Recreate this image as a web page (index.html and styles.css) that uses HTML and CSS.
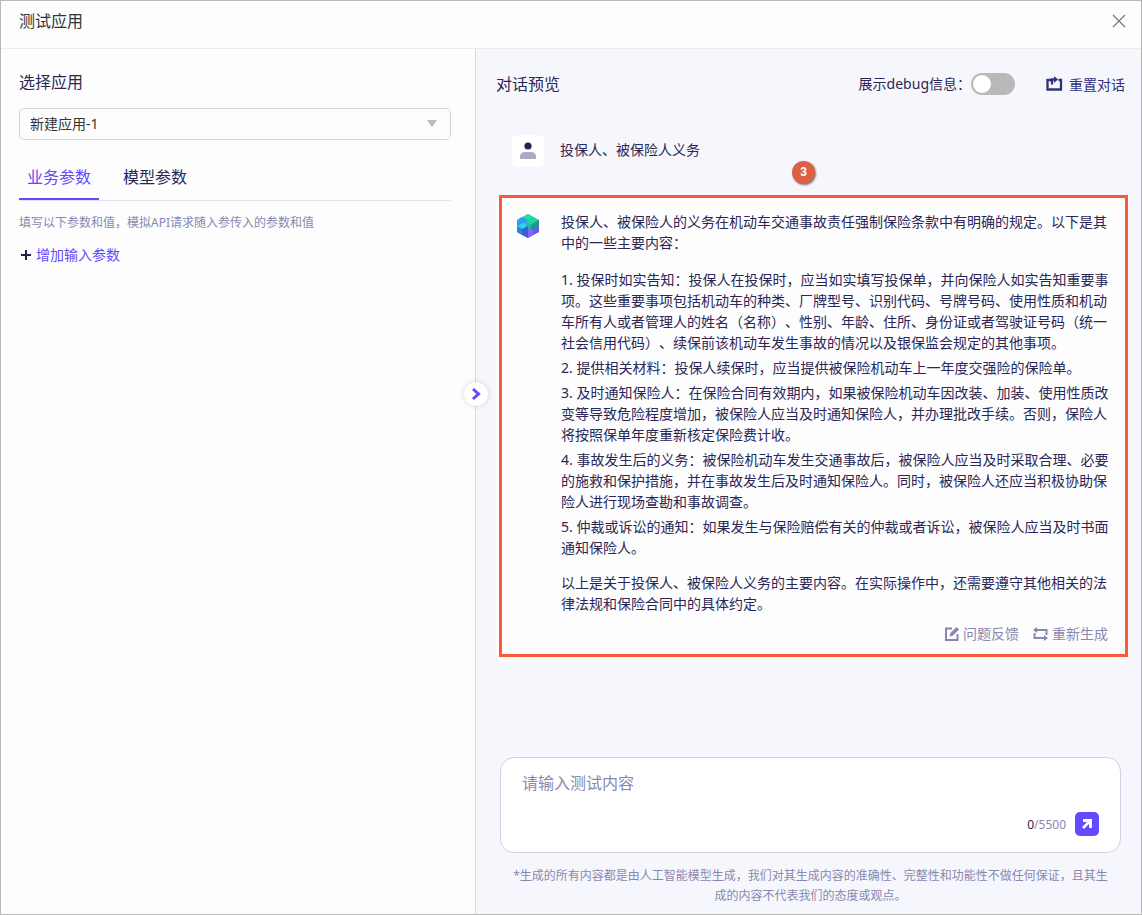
FILE: index.html
```html
<!DOCTYPE html>
<html lang="zh-CN">
<head>
    <meta charset="UTF-8">
    <meta name="viewport" content="width=device-width, initial-scale=1.0">
    <title>测试应用</title>
    <link rel="stylesheet" href="styles.css">
</head>
<body>

<header class="header">
    <h1>测试应用</h1>
    <button type="button" class="close" aria-label="关闭">
        <svg width="14" height="14" viewBox="0 0 14 14"><path d="M1 1l12 12M13 1L1 13" stroke="#777" stroke-width="1.2" fill="none"/></svg>
    </button>
</header>

<main class="main">
    <section class="settings">
        <label class="title" for="app">选择应用</label>
        <div class="select-box">
            <select id="app">
                <option>新建应用-1</option>
            </select>
        </div>
        <div class="tabs">
            <button type="button" class="tab active">业务参数</button>
            <button type="button" class="tab">模型参数</button>
        </div>
        <p class="hint">填写以下参数和值，模拟API请求随入参传入的参数和值</p>
        <button type="button" class="add">
            <svg width="10" height="10" viewBox="0 0 10 10"><path d="M5 0v10M0 5h10" stroke="#262244" stroke-width="2"/></svg>
            增加输入参数
        </button>
        <button type="button" class="collapse" aria-label="收起">
            <svg width="10" height="14" viewBox="0 0 10 14"><path d="M2 2l5.500 5L2 12" stroke="#624aff" stroke-width="3" fill="none"/></svg>
        </button>
    </section>

    <section class="preview">
        <div class="preview-head">
            <h2 class="title">对话预览</h2>
            <label class="debug" for="debug">展示debug信息：</label>
            <input type="checkbox" id="debug" class="switch">
            <button type="button" class="reset">
                <svg width="17" height="16" viewBox="0 0 17 16"><path d="M5 4H1.500v9.500h13.500V4h-2.500" fill="none" stroke="#333078" stroke-width="2.300"/><path d="M6 8.500V3.500h3" fill="none" stroke="#333078" stroke-width="2.300"/><path d="M8 0l4 3.500-4 3.500z" fill="#333078"/></svg>
                重置对话
            </button>
        </div>

        <div class="message question">
            <span class="avatar">
                <svg width="16" height="18" viewBox="0 0 16 18"><circle cx="8" cy="4" r="3.600" fill="#262150"/><path d="M0 17v-2q0-5 5-5h6q5 0 5 5v2z" fill="#abaac6"/></svg>
            </span>
            <p>投保人、被保险人义务</p>
        </div>

        <div class="message answer">
            <span class="step">3</span>
            <svg class="logo" width="24" height="26" viewBox="0 0 24 26">
                <path d="M12 1l11 6-11 6L1 7z" fill="#1fcbb0"/>
                <path d="M1 7l11 6v12L1 19z" fill="#2c9be8"/>
                <path d="M23 7l-11 6v12l11-6z" fill="#6557ef"/>
                <path d="M7 4l5-3 5 3-5 3z" fill="#25dda4"/>
                <path d="M1 7l5-3 6 3-5 4z" fill="#2e9df5"/>
                <path d="M10 9l8-4 5 2-8 5z" fill="#20d6a0"/>
                <path d="M15 12l8-5v6l-8 4z" fill="#189c85"/>
                <path d="M10 9l5 3v5l-5-3z" fill="#1fb9a4"/>
                <path d="M1 13l6-3 5 3-6 4z" fill="#2fd0ee"/>
                <path d="M1 13l5 3v6l-5-3z" fill="#2486de"/>
                <path d="M6 16l6-3v12l-6-3z" fill="#3c5fd4"/>
                <path d="M12 16l5 1v5l-5 3z" fill="#7d68ff"/>
            </svg>
            <div class="text">
                <p>投保人、被保险人的义务在机动车交通事故责任强制保险条款中有明确的规定。以下是其中的一些主要内容：</p>
                <ol>
                    <li>投保时如实告知：投保人在投保时，应当如实填写投保单，并向保险人如实告知重要事项。这些重要事项包括机动车的种类、厂牌型号、识别代码、号牌号码、使用性质和机动车所有人或者管理人的姓名（名称）、性别、年龄、住所、身份证或者驾驶证号码（统一社会信用代码）、续保前该机动车发生事故的情况以及银保监会规定的其他事项。</li>
                    <li>提供相关材料：投保人续保时，应当提供被保险机动车上一年度交强险的保险单。</li>
                    <li>及时通知保险人：在保险合同有效期内，如果被保险机动车因改装、加装、使用性质改变等导致危险程度增加，被保险人应当及时通知保险人，并办理批改手续。否则，保险人将按照保单年度重新核定保险费计收。</li>
                    <li>事故发生后的义务：被保险机动车发生交通事故后，被保险人应当及时采取合理、必要的施救和保护措施，并在事故发生后及时通知保险人。同时，被保险人还应当积极协助保险人进行现场查勘和事故调查。</li>
                    <li>仲裁或诉讼的通知：如果发生与保险赔偿有关的仲裁或者诉讼，被保险人应当及时书面通知保险人。</li>
                </ol>
                <p>以上是关于投保人、被保险人义务的主要内容。在实际操作中，还需要遵守其他相关的法律法规和保险合同中的具体约定。</p>
                <div class="actions">
                    <button type="button">
                        <svg width="14" height="14" viewBox="0 0 14 14"><path d="M7 1.500H1v11.500h11.500V7" fill="none" stroke="#8987ae" stroke-width="2"/><path d="M4.500 9.500l1-3.500 6-6 2.500 2.500-6 6z" fill="#8987ae"/></svg>
                        问题反馈
                    </button>
                    <button type="button">
                        <svg width="15" height="14" viewBox="0 0 15 14"><path d="M3 3h10.500v5M1.500 6v5H12" fill="none" stroke="#8987ae" stroke-width="2"/><path d="M4 0v6L0 3zM11 8v6l4-3z" fill="#8987ae"/></svg>
                        重新生成
                    </button>
                </div>
            </div>
        </div>

        <form class="composer">
            <textarea placeholder="请输入测试内容" aria-label="测试内容"></textarea>
            <div class="composer-foot">
                <span class="count"><b>0</b>/5500</span>
                <button type="button" class="send" aria-label="发送">
                    <svg width="10" height="10" viewBox="0 0 10 10"><path d="M1 1.500h7.500V9M8 2L1 9" fill="none" stroke="#fff" stroke-width="2.800"/></svg>
                </button>
            </div>
        </form>
        <p class="notice">*生成的所有内容都是由人工智能模型生成，我们对其生成内容的准确性、完整性和功能性不做任何保证，且其生成的内容不代表我们的态度或观点。</p>
    </section>
</main>

</body>
</html>
```
FILE: styles.css
```css
* {
    box-sizing: border-box;
}

body {
    display: flex;
    flex-direction: column;
    min-height: 100vh;
    margin: 0;
    border: 1px solid #b9b9b9;
    background-color: #fdfdfe;
    color: #2b2655;
    font-family: "Noto Sans", "Noto Sans CJK SC", sans-serif;
    font-size: 14px;
    line-height: 21px;
    text-spacing-trim: space-all;
}

h1, h2, p, ol {
    margin: 0;
    padding: 0;
    font-weight: normal;
}

button {
    display: flex;
    align-items: center;
    padding: 0;
    border: none;
    background: none;
    color: inherit;
    font: inherit;
    cursor: pointer;
}

.header {
    display: flex;
    justify-content: space-between;
    align-items: center;
    height: 48px;
    padding: 0 15px 8px 18px;
    border-bottom: 1px solid #ebebeb;
}

.header h1 {
    color: #333;
    font-size: 16px;
    line-height: 24px;
}

.main {
    display: grid;
    grid-template-columns: 5fr 7fr;
    flex: 1;
}

.title {
    display: block;
    font-size: 16px;
    line-height: 24px;
}

.settings {
    position: relative;
    padding: 21px 24px 21px 18px;
    border-right: 1px solid #d8d8e8;
}

.select-box {
    position: relative;
    margin-top: 14px;
}

.select-box select {
    display: block;
    width: 100%;
    height: 32px;
    padding: 0 10px 2px;
    border: 1px solid #d5d5d8;
    border-radius: 5px;
    background: none;
    color: #333;
    font: inherit;
    appearance: none;
}

.select-box::after {
    content: "";
    position: absolute;
    top: 12px;
    right: 14px;
    border: 5px solid transparent;
    border-top: 7px solid #bbb;
    border-bottom: none;
    pointer-events: none;
}

.tabs {
    display: flex;
    gap: 16px;
    margin-top: 16px;
    border-bottom: 1px solid #e3e2ee;
}

.tab {
    height: 44px;
    padding: 0 8px;
    border-bottom: 2px solid transparent;
    font-size: 16px;
    line-height: 24px;
}

.tab.active {
    border-color: #624aff;
    color: #624aff;
}

.hint {
    margin-top: 11px;
    color: #8987ae;
    font-size: 12px;
}

.add {
    gap: 5px;
    margin-top: 11px;
    padding-left: 2px;
    color: #624aff;
}

.collapse {
    position: absolute;
    top: 333px;
    right: -13px;
    justify-content: center;
    width: 24px;
    height: 24px;
    border-radius: 50%;
    background-color: #fff;
    box-shadow: 0 0 5px rgba(50, 45, 100, 0.2);
}

.preview {
    display: flex;
    flex-direction: column;
    padding: 20px 16px 8px 20px;
    background-color: #f6f7fd;
}

.preview-head {
    display: flex;
    align-items: center;
    height: 30px;
}

.debug {
    margin-left: auto;
    padding-bottom: 2px;
}

.switch {
    position: relative;
    width: 44px;
    height: 22px;
    margin: 0 31px 0 0;
    border-radius: 11px;
    background-color: #b9b9b9;
    appearance: none;
}

.switch::before {
    content: "";
    position: absolute;
    top: 2px;
    left: 2px;
    width: 18px;
    height: 18px;
    border-radius: 50%;
    background-color: #fff;
}

.switch:checked {
    background-color: #624aff;
}

.switch:checked::before {
    left: 24px;
}

.reset {
    gap: 6px;
    color: #333078;
}

.message {
    display: flex;
}

.question {
    gap: 16px;
    align-items: center;
    margin-top: 36px;
    padding-left: 16px;
}

.question p {
    padding-bottom: 4px;
}

.avatar {
    display: flex;
    justify-content: center;
    align-items: center;
    width: 32px;
    height: 32px;
    border-radius: 6px;
    background-color: #fff;
}

.answer {
    position: relative;
    gap: 21px;
    margin-top: 29px;
    padding: 15px 13px 18px 20px;
    border-radius: 8px;
    background-color: #fdfdfe;
}

/* highlight frame */
.answer::after {
    content: "";
    position: absolute;
    top: -1px;
    right: -3px;
    bottom: 5px;
    left: 3px;
    border: 3px solid #fa5a38;
    pointer-events: none;
}

.step {
    position: absolute;
    top: -35px;
    left: 296px;
    width: 23px;
    height: 23px;
    border-radius: 50%;
    background-color: #dc6144;
    box-shadow: 1px 1px 2px rgba(0, 0, 0, 0.5);
    color: #fff;
    font: bold 12px/23px "Liberation Sans", sans-serif;
    text-align: center;
}

.logo {
    flex: none;
    margin-top: 2px;
}

.text {
    flex: 1;
}

.text ol {
    display: grid;
    gap: 4px;
    margin: 16px 0 14px;
    list-style-position: inside;
}

.actions {
    display: flex;
    justify-content: flex-end;
    gap: 14px;
    margin-top: 9px;
    padding-right: 4px;
    color: #8987ae;
}

.actions button {
    gap: 4px;
}

.composer {
    height: 96px;
    margin: auto 4px 0;
    padding: 13px 21px;
    border: 1px solid #d0cfe4;
    border-radius: 14px;
    background-color: #fff;
}

.composer textarea {
    display: block;
    width: 100%;
    height: 41px;
    padding: 0;
    border: none;
    outline: none;
    background: none;
    color: inherit;
    font: inherit;
    font-size: 16px;
    line-height: 24px;
    resize: none;
}

.composer textarea::placeholder {
    color: #8987ae;
}

.composer-foot {
    display: flex;
    justify-content: flex-end;
    align-items: center;
    gap: 9px;
}

.count {
    color: #8987ae;
    font-size: 12px;
}

.count b {
    color: #262150;
    font-weight: normal;
}

.send {
    justify-content: center;
    width: 24px;
    height: 24px;
    border-radius: 5px;
    background-color: #624aff;
}

.notice {
    margin: 13px 16px 0;
    color: #8987ae;
    font-size: 12px;
    line-height: 20px;
    text-align: center;
}
```
